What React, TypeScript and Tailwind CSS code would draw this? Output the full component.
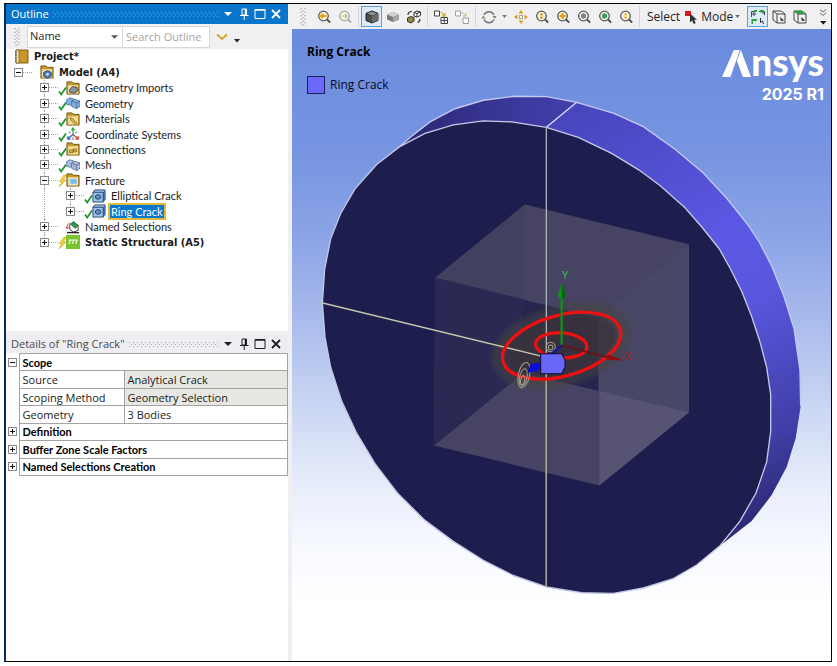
import { ReactNode, useState } from "react";
import clsx from "clsx";

type IconName =
  | "model"
  | "imports"
  | "geometry"
  | "materials"
  | "axes"
  | "connections"
  | "mesh"
  | "fracture"
  | "crack"
  | "named"
  | "static";

interface TreeItem {
  label: string;
  level: 1 | 2 | 3;
  icon: IconName;
  status?: "ok" | "pending";
  open?: boolean;
  bold?: boolean;
  last?: boolean;
}

const treeItems: TreeItem[] = [
  { label: "Model (A4)", level: 1, icon: "model", open: true, bold: true },
  { label: "Geometry Imports", level: 2, icon: "imports", status: "ok" },
  { label: "Geometry", level: 2, icon: "geometry", status: "ok" },
  { label: "Materials", level: 2, icon: "materials", status: "ok" },
  { label: "Coordinate Systems", level: 2, icon: "axes", status: "ok" },
  { label: "Connections", level: 2, icon: "connections", status: "ok" },
  { label: "Mesh", level: 2, icon: "mesh", status: "ok" },
  { label: "Fracture", level: 2, icon: "fracture", status: "pending", open: true },
  { label: "Elliptical Crack", level: 3, icon: "crack", status: "ok" },
  { label: "Ring Crack", level: 3, icon: "crack", status: "ok", last: true },
  { label: "Named Selections", level: 2, icon: "named" },
  {
    label: "Static Structural (A5)",
    level: 2,
    icon: "static",
    status: "pending",
    bold: true,
    last: true,
  },
];

const indents = { 1: "pl-2", 2: "pl-[34px]", 3: "pl-[60px]" };

function Folder({ children }: { children?: ReactNode }) {
  return (
    <>
      <path d="M1 3V1h5.500L8 2.500h6V14H1z" fill="#c79a2c" stroke="#6d5216" />
      <path d="M2 4.500h11v9H2z" fill="#f0dc92" />
      {children}
    </>
  );
}

function Blocks({ fill }: { fill: string }) {
  return (
    <g fill={fill} stroke="#45618a" strokeWidth=".8">
      <path d="M0 4.500l4-2.500 4 1v5l-4 2-4-1.500z" />
      <path d="M6 5.500l3.500-2L15 5.500v5.500l-3.500 2.500L6 11z" />
      <path d="M6 5.500l5.500 2v6M11.500 7.500l3.500-2" fill="none" />
    </g>
  );
}

function TreeIcon({ name }: { name: IconName }) {
  return (
    <svg viewBox="0 0 15 15" className="size-3.5 shrink-0" aria-hidden="true">
      {name === "model" && (
        <Folder>
          <path d="M4 8l4-2 4 2v4l-4 2-4-2z" fill="#4a7ec0" stroke="#284a78" />
          <circle cx="8" cy="10" r="1.500" fill="#cfe2f7" />
        </Folder>
      )}
      {name === "imports" && (
        <Folder>
          <path d="M4 9l3-3 5 1v4l-3 2-5-1z" fill="#8b94a0" stroke="#3d4650" />
        </Folder>
      )}
      {name === "geometry" && <Blocks fill="#7fb0e2" />}
      {name === "mesh" && (
        <>
          <Blocks fill="#b7c6e2" />
          <path d="M2 4v5M4.500 4v5M8 6v5M9.800 7v5" stroke="#7d8fb3" strokeWidth=".6" />
        </>
      )}
      {name === "materials" && (
        <Folder>
          <path d="M4 6l3 1 5 5-2 1.500-5-5z" fill="#e0b24a" stroke="#8c6a1c" strokeWidth=".8" />
        </Folder>
      )}
      {name === "connections" && (
        <Folder>
          <path d="M3.500 8.500h4v3h-4zM8 7.500h3.500v3H8z" fill="#d1b04f" stroke="#85661b" strokeWidth=".8" />
        </Folder>
      )}
      {name === "fracture" && (
        <Folder>
          <path d="M4 6h8v6H4z" fill="#7db9ea" stroke="#d8ebfb" />
        </Folder>
      )}
      {name === "axes" && (
        <g fill="none" strokeWidth="1.400">
          <path d="M7.500 8V2M5.800 3.500L7.500 1l1.700 2.500" stroke="#2fae3b" />
          <path d="M7.500 8l5 4M13 10v3h-3" stroke="#d5382f" />
          <path d="M7.500 8l-5 4M2 10v3h3" stroke="#2c62c9" />
          <path d="M3 5l2 1.500M12 5l-2 1.500M7.500 11v3" stroke="#8a8f96" />
        </g>
      )}
      {name === "crack" && (
        <>
          <path d="M1 3.500l2-2.500h11v10l-2 3H1z" fill="#9cc3ec" stroke="#26436e" />
          <path d="M12 14V3.500l2-2.500v10z" fill="#4474ab" />
          <path d="M1 3.500h11V14" fill="none" stroke="#26436e" />
          <ellipse cx="6.500" cy="8.500" rx="3" ry="2.400" fill="#5f92ca" stroke="#1f3b66" />
        </>
      )}
      {name === "named" && (
        <>
          <path d="M4 5l4-3 5 4v5l-5 2-4-3z" fill="#fff" stroke="#333" />
          <path d="M5 4.500l3-2.500 5 4-3 3z" fill="#2f9d48" stroke="#1d5f2c" strokeWidth=".8" />
          <path d="M1 9c0-3 1-5 3-6M1 9l-1-2M1 9l2-1" fill="none" stroke="#cf3838" />
          <path d="M1 13.500h13" stroke="#222" strokeWidth="1.500" />
        </>
      )}
      {name === "static" && (
        <>
          <path d="M0 0h15v15H0z" fill="#7ac52f" />
          <path d="M2.500 5.500h10M4.500 5.500l-1 4M8 5.500l-1 4M11.500 5.500l-1 4" stroke="#effbe0" strokeWidth="1.300" />
        </>
      )}
    </svg>
  );
}

function StatusMark({ status }: { status?: "ok" | "pending" }) {
  return (
    <svg viewBox="0 0 8 14" className="h-3.5 w-2 shrink-0 overflow-visible" aria-hidden="true">
      {status === "ok" && (
        <path d="M1 10.500l2.200 3L8 6.500" fill="none" stroke="#16962a" strokeWidth="1.700" />
      )}
      {status === "pending" && (
        <path d="M6 2L1.500 8.500H4L1 14l7-7H5l4-5z" fill="#f7d631" stroke="#c49a1b" strokeWidth=".6" />
      )}
    </svg>
  );
}

function Expander({ open, label }: { open?: boolean; label: string }) {
  return (
    <button
      type="button"
      aria-label={label}
      aria-expanded={!!open}
      className="relative block size-[9px] shrink-0 border border-[#8a8a8a] bg-white"
    >
      <svg viewBox="0 0 7 7" className="block size-[7px]" aria-hidden="true">
        <path d={open ? "M1 3.500h5" : "M1 3.500h5M3.500 1v5"} stroke="#111" />
      </svg>
    </button>
  );
}

function TreeRow({ item, selected, onSelect }: { item: TreeItem; selected: boolean; onSelect: () => void }) {
  return (
    <li className={clsx("relative flex min-h-0 items-center", indents[item.level])}>
      {item.level > 1 && (
        <span
          className={clsx(
            "absolute top-0 left-[38px] border-l border-dotted border-[#a5a5a5]",
            item.last && item.level === 2 ? "h-1/2" : "h-full"
          )}
        />
      )}
      {item.level === 3 && (
        <span
          className={clsx(
            "absolute top-0 left-16 border-l border-dotted border-[#a5a5a5]",
            item.last ? "h-1/2" : "h-full"
          )}
        />
      )}
      <Expander open={item.open} label={`Toggle ${item.label}`} />
      <span className="w-[9px] shrink-0 border-t border-dotted border-[#a5a5a5]" />
      <StatusMark status={item.status} />
      <TreeIcon name={item.icon} />
      <button
        type="button"
        onClick={onSelect}
        className={clsx(
          "ml-1 px-px leading-[13px] whitespace-nowrap",
          item.bold && "font-['DejaVu_Sans_Condensed',sans-serif] font-bold",
          selected && "bg-[#0b78cf] text-white outline-2 outline-[#e3b93c]"
        )}
      >
        {item.label}
      </button>
    </li>
  );
}

function PanelHeader({ title, active }: { title: string; active?: boolean }) {
  return (
    <header
      className={clsx(
        "flex shrink-0 items-center gap-1 pr-1.5 pl-[5px] text-[11px]",
        active ? "h-5 bg-[#0a76cb] text-white" : "h-[18px] bg-[#eeeef2] text-[#4a4a4a]"
      )}
    >
      <h2 className="whitespace-nowrap">{title}</h2>
      <svg className="h-[5px] min-w-0 flex-1" aria-hidden="true">
        <defs>
          <pattern id={active ? "dots-on" : "dots-off"} width="4" height="4" patternUnits="userSpaceOnUse">
            <path d="M0 0h1v1H0zM2 2h1v1H2z" fill={active ? "#5aa6e2" : "#aaaab0"} />
          </pattern>
        </defs>
        <rect width="100%" height="5" fill={active ? "url(#dots-on)" : "url(#dots-off)"} />
      </svg>
      <div className={clsx("flex items-center gap-1", !active && "text-[#1e1e1e]")}>
        <button type="button" aria-label={`${title} menu`}>
          <svg viewBox="0 0 12 12" className="size-3">
            <path d="M2 4h8L6 8z" fill="currentColor" />
          </svg>
        </button>
        <button type="button" aria-label={`Pin ${title}`}>
          <svg viewBox="0 0 12 12" className="size-3" fill="none" stroke="currentColor">
            <path d="M4 1h4.500v6H4zM2 7.500h8.500M6.200 8v4" />
            <path d="M7.500 1v6" strokeWidth="1.500" />
          </svg>
        </button>
        <button type="button" aria-label={`Maximize ${title}`}>
          <svg viewBox="0 0 12 12" className="size-3" fill="none" stroke="currentColor">
            <path d="M1 1.500h10v9H1z" />
            <path d="M1 2h10" strokeWidth="1.500" />
          </svg>
        </button>
        <button type="button" aria-label={`Close ${title}`}>
          <svg viewBox="0 0 12 12" className="size-3" stroke="currentColor" strokeWidth="1.800">
            <path d="M2 2l8 8M10 2l-8 8" />
          </svg>
        </button>
      </div>
    </header>
  );
}

function Grip() {
  return (
    <svg viewBox="0 0 6 18" className="h-[18px] w-1.5 shrink-0" aria-hidden="true">
      <path d="M1 0v18M5 0v18" stroke="#b9b9be" strokeWidth="1.500" strokeDasharray="1.500 2" />
      <path d="M3 2v16" stroke="#b9b9be" strokeWidth="1.500" strokeDasharray="1.500 2" />
    </svg>
  );
}

function Outline() {
  const [selected, setSelected] = useState("Ring Crack");
  const [filter, setFilter] = useState("Name");

  return (
    <section className="flex h-[327px] shrink-0 flex-col bg-white">
      <PanelHeader title="Outline" active />
      <div className="flex h-[25px] shrink-0 items-center bg-[#f0f0f2] pl-2 text-[11px]">
        <Grip />
        <div className="relative ml-[7px] h-[22px] w-24 border border-[#d8d8dc] bg-white">
          <select
            aria-label="Filter type"
            value={filter}
            onChange={(e) => setFilter(e.target.value)}
            className="h-full w-full appearance-none bg-transparent pl-0.5 text-[#1e1e1e]"
          >
            <option>Name</option>
            <option>Tag</option>
            <option>Type</option>
            <option>State</option>
          </select>
          <svg viewBox="0 0 8 4" className="pointer-events-none absolute top-2 right-1 h-1 w-[7px]">
            <path d="M0 0h8L4 4z" fill="#555" />
          </svg>
        </div>
        <input
          aria-label="Search Outline"
          placeholder="Search Outline"
          className="h-[22px] w-[87px] border border-l-0 border-[#d8d8dc] bg-white pl-[3px] placeholder:text-[#a6a6a6]"
        />
        <button type="button" aria-label="Expand search" className="ml-1.5">
          <svg viewBox="0 0 12 8" className="h-2 w-3">
            <path d="M1 1.500l5 4.500 5-4.500" fill="none" stroke="#d3a52a" strokeWidth="1.800" />
          </svg>
        </button>
        <button type="button" aria-label="Toolbar options" className="mt-2 ml-1.5">
          <svg viewBox="0 0 6 4" className="h-1 w-1.5">
            <path d="M0 0h6L3 3.500z" fill="#222" />
          </svg>
        </button>
      </div>
      <ul className="grid h-[201px] auto-rows-fr font-['Lato',sans-serif] text-[11px] text-[#1a1a1a]">
        <li className="flex min-h-0 items-center gap-[5px] pl-[9px]">
          <svg viewBox="0 0 14 15" className="h-[15px] w-3.5 shrink-0" aria-hidden="true">
            <path d="M1 1h12v13H1z" fill="#c9962c" stroke="#80601d" />
            <path d="M1 1h3v13H1z" fill="#f4e6b4" stroke="#80601d" strokeWidth=".8" />
            <path d="M0 3h2M0 6h2M0 9h2M0 12h2" stroke="#555" strokeWidth=".8" />
          </svg>
          <span className="font-['DejaVu_Sans_Condensed',sans-serif] leading-[13px] font-bold">Project*</span>
        </li>
        {treeItems.map((item) => (
          <TreeRow
            key={item.label}
            item={item}
            selected={item.label === selected}
            onSelect={() => setSelected(item.label)}
          />
        ))}
      </ul>
    </section>
  );
}

const detailGroups = [
  {
    name: "Scope",
    open: true,
    rows: [
      { name: "Source", value: "Analytical Crack", readOnly: true },
      { name: "Scoping Method", value: "Geometry Selection", readOnly: true },
      { name: "Geometry", value: "3 Bodies", readOnly: false },
    ],
  },
  { name: "Definition", open: false, rows: [] },
  { name: "Buffer Zone Scale Factors", open: false, rows: [] },
  { name: "Named Selections Creation", open: false, rows: [] },
];

function Details() {
  return (
    <section className="flex flex-1 flex-col bg-white">
      <PanelHeader title={'Details of "Ring Crack"'} />
      <table className="h-[123px] w-full table-fixed border-collapse text-[11px] leading-[13px] text-[#1a1a1a]">
        <colgroup>
          <col className="w-[13px]" />
          <col className="w-[105px]" />
          <col />
        </colgroup>
        {detailGroups.map((group) => (
          <tbody key={group.name}>
            <tr>
              <td className="pl-0.5">
                <Expander open={group.open} label={`Toggle ${group.name}`} />
              </td>
              <th
                colSpan={2}
                className="border border-[#a3a3a3] px-[3px] text-left font-['Lato',sans-serif] font-bold text-black"
              >
                {group.name}
              </th>
            </tr>
            {group.rows.map((row) => (
              <tr key={row.name}>
                <td />
                <th className="border border-[#a3a3a3] px-[3px] text-left font-normal whitespace-nowrap">
                  {row.name}
                </th>
                <td className={clsx("border border-[#a3a3a3] px-[3px]", row.readOnly && "bg-[#e7e7e3]")}>
                  {row.value}
                </td>
              </tr>
            ))}
          </tbody>
        ))}
      </table>
    </section>
  );
}

function ToolButton({ label, active, children }: { label: string; active?: boolean; children: ReactNode }) {
  return (
    <button
      type="button"
      aria-label={label}
      aria-pressed={active}
      className={clsx(
        "flex h-[21px] w-[21px] shrink-0 items-center justify-center",
        active && "border border-[#5aa0d8] bg-[#dcebf7]"
      )}
    >
      <svg viewBox="0 0 16 16" className="size-4 shrink-0" fill="none">
        {children}
      </svg>
    </button>
  );
}

function Lens({ faded, children }: { faded?: boolean; children?: ReactNode }) {
  return (
    <>
      <circle cx="7.500" cy="7" r="4.800" fill="#fbf3da" stroke={faded ? "#a9a9a9" : "#5b5b5b"} strokeWidth="1.300" />
      <path d="M11 10.500l3.200 3.200" stroke={faded ? "#a9a9a9" : "#4a4a4a"} strokeWidth="1.800" />
      {children}
    </>
  );
}

function Separator() {
  return <span className="mr-0.5 ml-[3px] h-[21px] w-px shrink-0 bg-[#d4d4d8]" />;
}

function ViewToolbar() {
  return (
    <div className="flex h-[25px] shrink-0 items-center overflow-hidden bg-[#f0f0f2] pl-2 text-[12px] text-[#1e1e1e]">
      <Grip />
      <span className="w-[7px] shrink-0" />
      <ToolButton label="Previous view">
        <Lens>
          <path d="M10.500 7H5M7 4.800L4.800 7 7 9.200" stroke="#e0a512" strokeWidth="1.800" />
        </Lens>
      </ToolButton>
      <ToolButton label="Next view">
        <Lens faded>
          <path d="M4.500 7H10M8 4.800L10.200 7 8 9.200" stroke="#b5b5b5" strokeWidth="1.200" />
        </Lens>
      </ToolButton>
      <Separator />
      <ToolButton label="Shaded with edges" active>
        <path d="M2 4.500L8 2l6 2.500v7L8 14l-6-2.500z" fill="#4d4d4d" stroke="#222" />
        <path d="M2 4.500L8 2l6 2.500L8 7z" fill="#929292" stroke="#222" strokeWidth=".7" />
        <path d="M8 7l6-2.500v7L8 14z" fill="#6b6b6b" />
      </ToolButton>
      <ToolButton label="Shaded">
        <path d="M2 5.500L8 3l6 2.500v5L8 13l-6-2.500z" fill="#7b7b7b" />
        <path d="M2 5.500L8 3l6 2.500L8 8z" fill="#d2d2d2" />
        <path d="M8 8l6-2.500v5L8 13z" fill="#a5a5a5" />
      </ToolButton>
      <ToolButton label="Toggle thick shells">
        <path d="M8 3.500L11 2l3.500 1v3.500L11 8 8 7zM8 3.500l3 1 3.500-1.500M11 4.500V8" fill="#fff" stroke="#333" />
        <path d="M1.500 9l3-1.500L8 8.500V12l-3 2-3.500-1.500z" fill="#8f8c3c" stroke="#333" />
        <path d="M2 6c0-2 1.500-3.500 4-3.500M11.500 13.500c1.500-.5 2.500-1.500 2.500-3.500" stroke="#333" strokeWidth="1.200" />
      </ToolButton>
      <Separator />
      <ToolButton label="Expand selection">
        <path d="M1.500 2h5v5h-5zM8 8.500h6.500v6H8zM11.200 8.500v6M8 11.500h6.500" fill="#fff" stroke="#444" />
        <path d="M8 3l3.500 3.500M12 4v3H9" stroke="#d9b23b" strokeWidth="1.300" />
      </ToolButton>
      <ToolButton label="Shrink selection">
        <path d="M1.500 2h5v5h-5zM9 9h5.500v5.500H9z" fill="#fafafa" stroke="#a0a0a0" />
        <path d="M8 3l3.500 3.500M12 4v3H9" stroke="#c4b88c" />
      </ToolButton>
      <Separator />
      <ToolButton label="Rotate">
        <path d="M3 6a5.500 5.500 0 0 1 10 0M13 10.500a5.500 5.500 0 0 1-10 0" stroke="#777" strokeWidth="1.500" />
        <path d="M11.500 7h4L13.800 10zM.5 9.500h4L2.200 6.500z" fill="#8d8468" />
      </ToolButton>
      <span className="flex w-[11px] shrink-0 justify-center">
        <svg viewBox="0 0 6 4" className="h-[3px] w-[5px]">
          <path d="M0 0h6L3 4z" fill="#777" />
        </svg>
      </span>
      <ToolButton label="Pan">
        <path d="M8 1l2.500 3.500h-5zM8 15l2.500-3.500h-5zM1 8l3.500-2.500v5zM15 8l-3.500-2.500v5z" fill="#d8a31a" />
        <path d="M6.500 6.500h3v3h-3z" fill="#fff" stroke="#555" strokeDasharray="1 1" />
      </ToolButton>
      <ToolButton label="Zoom">
        <Lens>
          <path d="M7.500 3.800l2 2.500h-4zM7.500 10.200l2-2.500h-4z" fill="#c98f16" />
        </Lens>
      </ToolButton>
      <ToolButton label="Box zoom">
        <Lens>
          <path d="M7.500 4v6M4.500 7h6" stroke="#dca214" strokeWidth="2.200" />
        </Lens>
      </ToolButton>
      <ToolButton label="Zoom to fit">
        <Lens>
          <path d="M5 5.500L7.500 4 10 5.500v3L7.500 10 5 8.500z" fill="#76839c" />
        </Lens>
      </ToolButton>
      <ToolButton label="Zoom to selection">
        <Lens>
          <path d="M5 5.500L7.500 4 10 5.500v3L7.500 10 5 8.500z" fill="#3ba05d" />
        </Lens>
      </ToolButton>
      <ToolButton label="Magnifier window">
        <Lens>
          <path d="M7.500 3.800l2 2.500h-4zM7.500 10.200l2-2.500h-4z" fill="#e3af25" />
        </Lens>
      </ToolButton>
      <Separator />
      <span className="mr-1 ml-[5px]">Select</span>
      <button type="button" className="flex shrink-0 items-center gap-0.5">
        <svg viewBox="0 0 15 14" className="h-3.5 w-[15px]" aria-hidden="true">
          <path d="M1 1h6v5H1z" fill="#e0141c" />
          <path d="M6 3.500v9l2.200-2 1.500 3.500 2-1-1.500-3.300H13z" fill="#333" />
        </svg>
        Mode
        <svg viewBox="0 0 6 4" className="h-[3px] w-[5px]" aria-hidden="true">
          <path d="M0 0h6L3 4z" fill="#666" />
        </svg>
      </button>
      <span className="w-[7px] shrink-0" />
      <ToolButton label="Smart select" active>
        <path d="M1.500 8V2.500H7M1.500 5H6M4 2v5M9 2.500h5.500V6" stroke="#3c5148" />
        <path d="M10 1h4v4l-4-2zM1.500 10H7v2H3v3H1.500z" fill="#31a03c" />
        <path d="M4 1h3v2H4z" fill="#31a03c" />
        <path d="M10.500 9v4.500l2-1.500 1 3" stroke="#333" />
      </ToolButton>
      <ToolButton label="Vertex">
        <path d="M2 2h8l4 3v9H6l-4-3zM2 2l4 3v9M6 5h8" stroke="#454545" />
        <path d="M9 8l4 3.500-3 .5z" fill="#222" />
      </ToolButton>
      <ToolButton label="Edge">
        <path d="M2 2h8l4 3v9H6l-4-3zM2 2l4 3v9M6 5h8" stroke="#454545" />
        <path d="M1.500 2l4.500 3h5V2z" fill="#2ea33b" />
        <path d="M9 8l4 3.500-3 .5z" fill="#222" />
      </ToolButton>
      <button type="button" aria-label="More tools" className="mr-1 ml-auto shrink-0">
        <svg viewBox="0 0 8 18" className="h-[18px] w-2" fill="none">
          <path d="M1 1.500l3 2.500 3-2.500M1 5l3 2.500L7 5" stroke="#666" />
          <path d="M1 13h6.500l-3.200 3.500z" fill="#111" />
        </svg>
      </button>
    </div>
  );
}

// Front face and rim of the disc, in scene units
const faceOutline =
  "709,140 805,170 905,217 985,265 1050,312 1125,378 1178,438 1228,500 1262,560 1295,625 1325,700 1350,775 1370,850 1382,930 1382,1040 1370,1130 1338,1222 1290,1305 1230,1378 1160,1435 1090,1475 1000,1503 910,1519 815,1517 709,1500 610,1466 520,1421 430,1365 345,1303 262,1222 195,1135 140,1045 95,950 62,850 45,760 37,660 44,560 62,470 92,395 135,322 200,250 268,198 345,158 430,133 520,121 605,124";
const rimRight =
  "709,140 800,66 910,98 1000,138 1095,205 1180,275 1250,350 1315,430 1348,480 1385,550 1420,635 1452,735 1470,860 1472,965 1457,1060 1430,1145 1385,1228 1325,1305 1230,1378 1290,1305 1338,1222 1370,1130 1382,1040 1382,930 1370,850 1350,775 1325,700 1295,625 1262,560 1228,500 1178,438 1125,378 1050,312 985,265 905,217 805,170";
const rimLeft =
  "268,198 300,170 360,124 435,85 520,60 615,48 710,49 800,66 709,140 605,124 520,121 430,133 345,158";
const backEdge =
  "268,198 300,170 360,124 435,85 520,60 615,48 710,49 800,66 910,98 1000,138 1095,205 1180,275 1250,350 1315,430 1348,480 1385,550 1420,635 1452,735 1470,860 1472,965";

function Scene() {
  return (
    <svg
      viewBox="-54 -153 1617 1896"
      preserveAspectRatio="xMidYMid meet"
      className="absolute inset-0 h-full w-full"
      role="img"
      aria-label="Ring crack model"
    >
      <defs>
        <linearGradient id="rim-left" x1="0" y1="0" x2="1" y2="0">
          <stop offset="0" stopColor="#2a2772" />
          <stop offset=".6" stopColor="#3b3799" />
          <stop offset="1" stopColor="#4440ae" />
        </linearGradient>
        <linearGradient id="rim-right" gradientUnits="userSpaceOnUse" x1="709" y1="66" x2="1400" y2="1378">
          <stop offset="0" stopColor="#4743b8" />
          <stop offset=".4" stopColor="#5b58e4" />
          <stop offset=".55" stopColor="#5956dd" />
          <stop offset=".8" stopColor="#413ea8" />
          <stop offset="1" stopColor="#24225e" />
        </linearGradient>
        <filter id="soft">
          <feGaussianBlur stdDeviation="6" />
        </filter>
      </defs>

      <g transform="scale(1 1.014)">
        {/* Disc */}
        <polygon points={rimLeft} fill="url(#rim-left)" />
        <polygon points={rimRight} fill="url(#rim-right)" />
        <polygon points={faceOutline} fill="#1e1e4e" stroke="#c3c8e6" strokeWidth="4" />
        <polyline points={backEdge} fill="none" stroke="#c3caef" strokeWidth="4" />
        <path d="M709 140L800 66" stroke="#d9dcf5" strokeWidth="4" />

        {/* Transparent block */}
        <path d="M645 368L1137 486V983L868 1200 372 1081 376 585z" fill="#464462" />
        <path d="M645 368L376 585 640 650z" fill="#42405f" />
        <path d="M376 585L866 705V920L640 866 372 1081z" fill="#26254f" />
        <path d="M376 585L640 650V866L372 1081z" fill="#2a2953" />
        <path d="M866 705V920L1137 983V486z" fill="#494766" />
        <path d="M868 920L1137 983 868 1200z" fill="#575473" />

        {/* Buffer zone around the crack */}
        <g transform="rotate(-15 755 786)" filter="url(#soft)">
          <ellipse cx="755" cy="786" rx="216" ry="120" fill="#46423f" fillOpacity=".55" />
          <ellipse cx="755" cy="786" rx="170" ry="84" fill="#35303a" fillOpacity=".65" />
        </g>

        <path d="M709 140V1500" stroke="#aeb0b8" strokeWidth="4" />
        <path d="M709 868V1500" stroke="#a9a894" strokeWidth="4" />
        <path d="M35 659L694 817" stroke="#c5c6ac" strokeWidth="4" />

        {/* Crack rings */}
        <g fill="none" stroke="#ee1010" strokeWidth="10">
          <ellipse cx="755" cy="786" rx="182" ry="90" transform="rotate(-15 755 786)" />
          <ellipse cx="754" cy="785" rx="77" ry="37" transform="rotate(4 754 785)" />
        </g>
        <g fill="none" stroke="#a69f88" strokeWidth="3">
          <ellipse cx="642" cy="873" rx="17" ry="38" transform="rotate(12 642 873)" />
          <ellipse cx="640" cy="880" rx="11" ry="26" transform="rotate(12 640 880)" />
          <ellipse cx="638" cy="888" rx="6" ry="13" transform="rotate(12 638 888)" />
          <circle cx="722" cy="790" r="14" />
          <circle cx="722" cy="791" r="7" />
        </g>

        {/* Axes */}
        <path d="M755 785V640" stroke="#0f8f1b" strokeWidth="7" />
        <path d="M755 598L767 640 755 648 743 640z" fill="#0b941a" />
        <path d="M755 598L767 640 755 648z" fill="#06650f" />
        <path d="M755 785L892 820" stroke="#6a1119" strokeWidth="5" />
        <path d="M893 812L943 830 889 828z" fill="#8f0d12" />
        <path d="M755 785L722 812" stroke="#1418a0" strokeWidth="7" />
        <path d="M694 835L662 840 652 866 682 862 694 848z" fill="#0a0fd8" />
        <path d="M692 810H755L765 828V850L755 869H692z" fill="#6867f8" stroke="#0c0c28" strokeWidth="3" />
      </g>
      <text x="755" y="597" fill="#37c24c" className="font-['Liberation_Sans',sans-serif] text-[30px]">
        Y
      </text>
      <text x="944" y="841" fill="#b3151c" className="font-['Liberation_Sans',sans-serif] text-[30px]">
        X
      </text>
    </svg>
  );
}

function Viewport() {
  return (
    <div className="relative flex-1 bg-[linear-gradient(#6a8bde,#7795e1_20%,#8aa3e6_32%,#a0b3ea_42%,#b5c5ef_51%,#d5def5_64%,#e9eefb_73%,#f8faff_83%,#ffffff_92%)]">
      <Scene />
      <div className="relative flex items-start justify-between pr-[7px] pl-[15px] text-[#0a0a1c]">
        <div className="pt-[13px]">
          <h1 className="text-[12px] leading-5 font-bold text-black">Ring Crack</h1>
          <p className="mt-3.5 flex items-center gap-[5px] text-[12px] leading-[18px]">
            <span className="size-[18px] border border-[#1e1e5a] bg-[#6b68fb]" />
            Ring Crack
          </p>
        </div>
        <div className="flex flex-col items-end pt-[11px] text-white">
          <p className="flex items-end font-['Lato',sans-serif] text-[37px] leading-[44px] font-black">
            <svg viewBox="0 0 86 80" className="mb-[7px] h-[27px] w-[29px]" aria-label="A">
              <path d="M0 80L35 0H53L25 80z" fill="#fff" />
              <path d="M56 0L86 80H62L44 32z" fill="#fff" />
            </svg>
            nsys
          </p>
          <p className="font-['Inter',sans-serif] text-[16px] leading-5 font-bold">2025 R1</p>
        </div>
      </div>
    </div>
  );
}

export default function App() {
  return (
    <div className="flex min-h-screen bg-white pt-[3px] pr-[5px] pb-1 pl-1 font-['Open_Sans',sans-serif]">
      <div className="flex min-w-0 flex-1 border border-l-2 border-black border-l-[#0b2a5c]">
        <aside className="flex w-[282px] shrink-0 flex-col gap-1 bg-[#f0f0f2]">
          <Outline />
          <Details />
        </aside>
        <div className="w-1 shrink-0 bg-[#f0f0f2]" />
        <main className="flex min-w-0 flex-1 flex-col">
          <ViewToolbar />
          <Viewport />
        </main>
      </div>
    </div>
  );
}
